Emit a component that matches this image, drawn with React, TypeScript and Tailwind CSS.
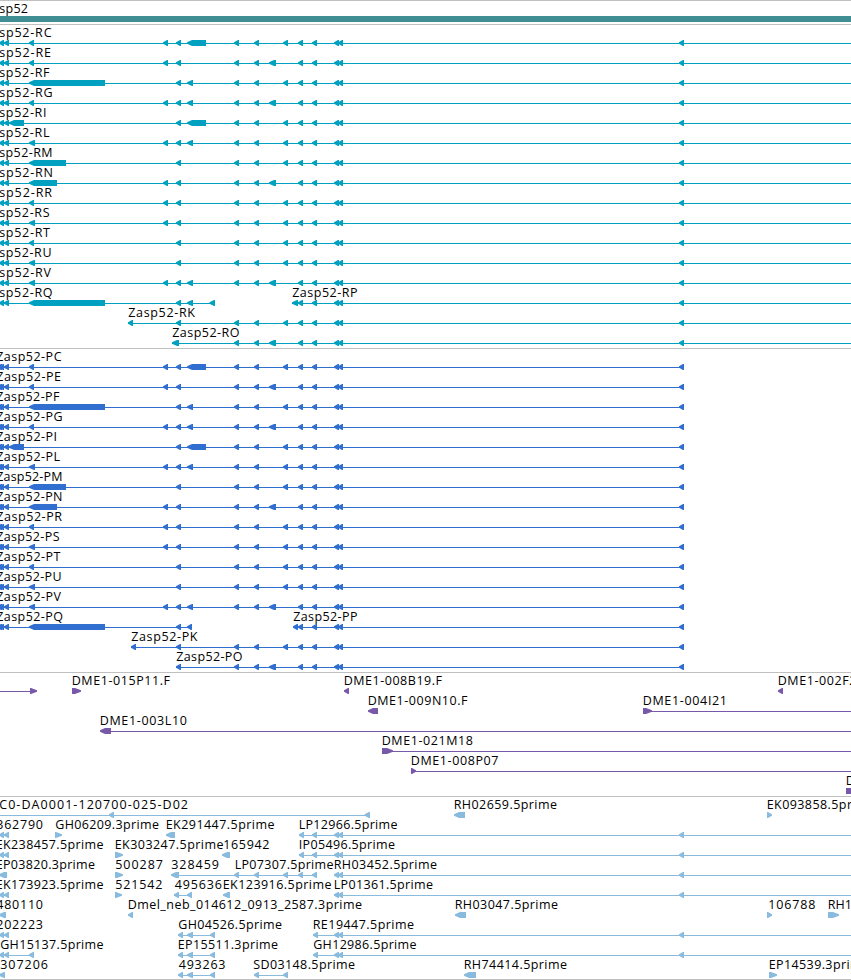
type Feature = { from: number; to: number; dir?: 'l' | 'r' | 'n' };
type Label = { text: string; x: number; end?: number };
type Row = { labels: Label[]; lines: [number, number][]; features: Feature[] };

const VIEW = 851;

const l = (from: number, to: number): Feature => ({ from, to, dir: 'l' });
const r = (from: number, to: number): Feature => ({ from, to, dir: 'r' });
const t = (text: string, x: number, end?: number): Label => ({ text, x, end });

const B = l(163, 168);
const C = l(176, 181);
const D = l(187, 193);
const D_LONG = l(187, 206);
const G = l(283, 288);
const H = l(269, 276);
const EF = [l(234, 239), l(254, 259)];
const PAIR = [l(334, 339), l(338, 343)];
const FAR = l(679, 684);
const TAIL = [l(298, 303), l(312, 317), ...PAIR, FAR];
const START = [l(-1, 4), l(4, 9)];

// Isoform letter, label end (transcript / protein), exons unique to the isoform.
const isoforms: [string, number, number, Feature[]][] = [
  ['C', 51.5, 61.5, [l(29, 34), B, C, D_LONG, G]],
  ['E', 51, 61, [l(29, 34), B, C, H]],
  ['F', 49.5, 59.5, [l(29, 105), C, D, G]],
  ['G', 52.5, 62.5, [l(29, 34), B, C, D, H]],
  ['I', 46.5, 57, [l(9, 24), C, D_LONG, G]],
  ['L', 49.5, 60, [l(29, 35), B, C, D, G]],
  ['M', 52.5, 62.5, [l(29, 66), C, G]],
  ['N', 53, 62.5, [l(29, 57), B, C, H]],
  ['R', 52, 62, [l(29, 34), B, C, G]],
  ['S', 49.5, 59.5, [l(29, 35), B, C, G]],
  ['T', 50, 60.5, [l(29, 34), C, G]],
  ['U', 51.5, 61.5, [l(29, 35), C, G]],
  ['V', 51, 61, [l(29, 35), B, C, D, H]],
];

const transcripts: Row[] = [
  ...isoforms.map(([id, end, , own]) => ({
    labels: [t('sp52-R' + id, -1, end)],
    lines: [[0, VIEW]] as [number, number][],
    features: [...START, ...own, ...EF, ...TAIL],
  })),
  {
    labels: [t('sp52-RQ', -1, 52.5), t('Zasp52-RP', 292, 357.5)],
    lines: [[0, 215], [292, VIEW]],
    features: [...START, l(29, 105), C, D, l(209.5, 215), l(292, 298), ...TAIL],
  },
  { labels: [t('Zasp52-RK', 128, 195)], lines: [[128, VIEW]], features: [l(128, 133), C, ...EF, G, ...TAIL] },
  { labels: [t('Zasp52-RO', 172, 239.5)], lines: [[172, VIEW]], features: [l(172, 179), ...EF, H, ...TAIL] },
];

const P_START = [l(-3, 2), ...START];
const proteins: Row[] = [
  ...isoforms.map(([id, , end, own]) => ({
    labels: [t('Zasp52-P' + id, -4, end)],
    lines: [[0, 684]] as [number, number][],
    features: [...P_START, ...own, ...EF, ...TAIL],
  })),
  {
    labels: [t('Zasp52-PQ', -4, 63), t('Zasp52-PP', 293, 357.5)],
    lines: [[0, 192], [293, 684]],
    features: [...P_START, l(29, 105), C, l(187, 192), l(293, 298), ...TAIL],
  },
  { labels: [t('Zasp52-PK', 131, 197.5)], lines: [[131, 684]], features: [l(131, 136), C, ...EF, G, ...TAIL] },
  { labels: [t('Zasp52-PO', 176, 242.5)], lines: [[176, 684]], features: [C, ...EF, H, ...TAIL] },
];

const clones: Row[] = [
  {
    labels: [t('DME1-015P11.F', 71.5, 170), t('DME1-008B19.F', 343.5, 442), t('DME1-002F21.F', 777.5, 875)],
    lines: [[0, 32]],
    features: [r(30, 37), r(72, 81), l(344, 349), l(778, 783)],
  },
  {
    labels: [t('DME1-009N10.F', 367.5, 467.5), t('DME1-004I21', 642.5, 727)],
    lines: [[650, VIEW]],
    features: [l(368, 378), r(643, 652)],
  },
  { labels: [t('DME1-003L10', 99.5, 187)], lines: [[110, VIEW]], features: [l(100, 111)] },
  { labels: [t('DME1-021M18', 381.5, 473)], lines: [[388, VIEW]], features: [r(382, 393)] },
  { labels: [t('DME1-008P07', 410.5, 498.5)], lines: [[411, VIEW]], features: [r(411, 416)] },
  { labels: [t('DME1', 845.5)], lines: [], features: [{ from: 846, to: 856, dir: 'n' }] },
];

const SHORT_CHAIN = [l(178, 183), l(187, 193), l(210, 215)];
const ests: Row[] = [
  {
    labels: [t('C0-DA0001-120700-025-D02', -1, 188), t('RH02659.5prime', 453.5, 557), t('EK093858.5prime', 766.5, 875)],
    lines: [[0, 369]],
    features: [l(109, 114), l(364.5, 370), l(454, 465), r(767, 772)],
  },
  {
    labels: [t('362790', -4, 43), t('GH06209.3prime', 55, 159), t('EK291447.5prime', 165.5, 274.5), t('LP12966.5prime', 298.5, 397.5)],
    lines: [[0, 8], [299, VIEW]],
    features: [...START, r(55, 62), l(166, 175), l(299, 304), l(312, 317), ...PAIR, FAR],
  },
  {
    labels: [t('EK238457.5prime', -4.5, 103.5), t('EK303247.5prime', 114.5, 223.5), t('165942', 223, 269.5), t('IP05496.5prime', 298.5, 395)],
    lines: [[0, 8], [299, VIEW]],
    features: [...START, r(115, 123), l(222, 230), l(299, 304), l(312, 317), ...PAIR, FAR],
  },
  {
    labels: [t('EP03820.3prime', -4.5, 95), t('500287', 115, 163), t('328459', 171, 219), t('LP07307.5prime', 234.5, 333.5), t('RH03452.5prime', 333.5, 437)],
    lines: [[176, 317], [334, VIEW]],
    features: [l(-1, 7), r(115, 123), l(171, 179), ...EF, G, l(298, 303), l(312, 317), ...PAIR, FAR],
  },
  {
    labels: [t('EK173923.5prime', -4.5, 103.5), t('521542', 115, 162.5), t('495636', 174.5, 222), t('EK123916.5prime', 222.5, 331.5), t('LP01361.5prime', 333.5, 433)],
    lines: [[0, 8], [174, 192], [334, VIEW]],
    features: [...START, r(115, 122), l(174, 179), l(187, 192), l(223, 230), ...PAIR, FAR],
  },
  {
    labels: [t('480110', -4, 43), t('Dmel_neb_014612_0913_2587.3prime', 127.5, 362), t('RH03047.5prime', 454.5, 558), t('106788', 768, 815.5), t('RH14', 827.5, 859)],
    lines: [],
    features: [l(-1, 6), l(128, 133), l(455, 466), r(767, 772), r(828, 839)],
  },
  {
    labels: [t('202223', -4, 43), t('GH04526.5prime', 178, 282), t('RE19447.5prime', 312.5, 414)],
    lines: [[0, 8], [178, 215], [313, VIEW]],
    features: [...START, ...SHORT_CHAIN, l(313, 318), ...PAIR, FAR],
  },
  {
    labels: [t('GH15137.5prime', 0, 103.5), t('EP15511.3prime', 177.5, 278), t('GH12986.5prime', 313, 416.5)],
    lines: [[0, 34], [178, 215], [313, VIEW]],
    features: [...START, l(29, 34), ...SHORT_CHAIN, l(313, 318), ...PAIR, FAR],
  },
  {
    labels: [t('307206', 0, 48), t('493263', 178.5, 225.5), t('SD03148.5prime', 253, 355), t('RH74414.5prime', 463.5, 567), t('EP14539.3prime', 768.5, 869)],
    lines: [[178, 215], [254, 288]],
    features: [l(-1, 5), ...SHORT_CHAIN, l(254, 259), G, l(464, 476), r(769, 777)],
  },
];

// Directional exon: a flat body that tapers to a point at the reading end.
function Exon({ from, to, dir }: Feature) {
  const head = Math.min(to - from - 1, dir === 'r' ? 6 : 5);
  if (dir === 'n') return <rect x={from} y={14} width={to - from} height={6} />;
  const points =
    dir === 'r'
      ? `${from},14 ${to - head},14 ${to},16.2 ${to},17.8 ${to - head},20 ${from},20`
      : `${to},14 ${from + head},14 ${from},16.2 ${from},17.8 ${from + head},20 ${to},20`;
  return <polygon points={points} />;
}

function Name({ text, x, end }: Label) {
  return (
    <text
      x={x + 0.2}
      y={11}
      className="fill-black"
      textLength={end === undefined ? undefined : end - x - 0.2}
      lengthAdjust="spacing"
    >
      {text}
    </text>
  );
}

function TrackRow({ row }: { row: Row }) {
  return (
    <svg width={VIEW} height={20} className="block shrink-0 overflow-visible">
      {row.lines.map(([a, b], i) => (
        <rect key={i} x={a} y={17} width={b - a} height={1} />
      ))}
      {row.features.map((f, i) => (
        <Exon key={i} {...f} />
      ))}
      {row.labels.map((n) => (
        <Name key={n.text} {...n} />
      ))}
    </svg>
  );
}

function Track({ rows, className }: { rows: Row[]; className: string }) {
  return (
    <section className={`flex flex-col border-t border-[#c0c0c0] pt-px ${className}`}>
      {rows.map((row, i) => (
        <TrackRow key={i} row={row} />
      ))}
    </section>
  );
}

export default function App() {
  return (
    <main className="flex h-[980px] w-[851px] flex-col overflow-hidden bg-white font-['Open_Sans','DejaVu_Sans',sans-serif] text-[12.5px] text-black">
      <section className="flex h-6 shrink-0 flex-col border-t border-[#c0c0c0]">
        <svg width={VIEW} height={15} className="block shrink-0">
          <text x={-0.8} y={12} textLength={28.8} lengthAdjust="spacing">
            sp52
          </text>
        </svg>
        <div className="h-1.5 shrink-0 bg-[#408e94]" />
      </section>
      <Track rows={transcripts} className="fill-[#00a0c0] pb-0.5" />
      <Track rows={proteins} className="fill-[#306fd0] pb-0.5" />
      <Track rows={clones} className="fill-[#7858a8] pb-0.5" />
      <Track rows={ests} className="fill-[#88bbdd] border-b pb-px" />
    </main>
  );
}
